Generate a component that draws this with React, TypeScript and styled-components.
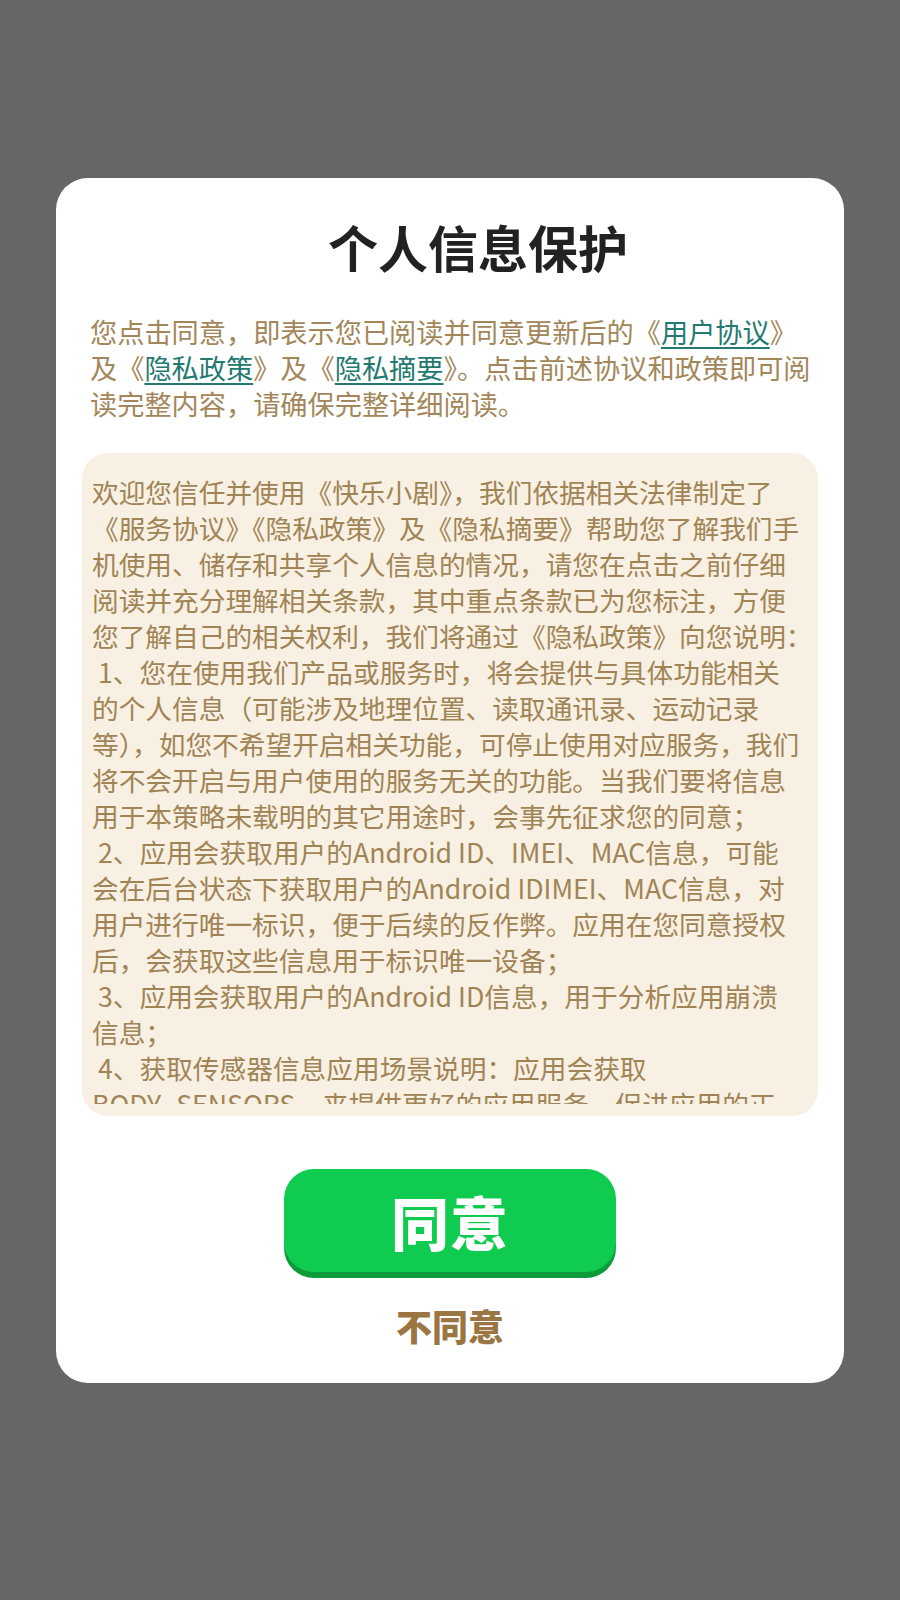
import React from "react";
import styled, { createGlobalStyle } from "styled-components";

const GlobalStyle = createGlobalStyle`
  html, body {
    margin: 0;
    padding: 0;
    background: #666666;
  }
  body {
    font-family: "Noto Sans CJK SC", "Noto Sans", sans-serif;
  }
`;

const StyledPage = styled.div`
  width: 900px;
  min-height: 1600px;
  padding-top: 178px;
  box-sizing: border-box;
`;

const StyledCard = styled.div`
  width: 788px;
  margin-left: 56px;
  background: #ffffff;
  border-radius: 32px;
  padding: 38px 26px 36px;
  box-sizing: border-box;
  display: flex;
  flex-direction: column;
  align-items: stretch;
`;

const StyledTitle = styled.h1`
  margin: 0;
  padding-left: 56px;
  text-align: center;
  font-size: 50px;
  line-height: 60px;
  font-weight: 700;
  color: #222222;
`;

const StyledIntro = styled.div`
  margin-top: 37px;
  padding-left: 8px;
  font-size: 27.2px;
  line-height: 36px;
  font-weight: 400;
  color: #a3875a;
`;

const StyledLine = styled.div`
  white-space: pre;
  height: 36px;
`;

const StyledLink = styled.span`
  color: #237a70;
  text-decoration: underline;
  text-decoration-thickness: 2px;
  text-underline-offset: 4px;
`;

const StyledBox = styled.div`
  margin-top: 32px;
  height: 663px;
  background: #f8f0e2;
  border-radius: 26px;
  padding: 21px 0 12px 10px;
  box-sizing: border-box;
`;

const StyledScroll = styled.div`
  height: 630px;
  overflow: hidden;
  font-size: 26.7px;
  line-height: 36px;
  font-weight: 400;
  color: #a08456;
`;

const StyledActions = styled.div`
  display: flex;
  flex-direction: column;
  align-items: center;
  margin-top: 53px;
`;

const StyledAgree = styled.button`
  width: 332px;
  height: 103px;
  border: none;
  border-radius: 30px;
  background: #0fcb4f;
  box-shadow: 0 6px 0 #0c9a3a;
  color: #ffffff;
  font-family: "Noto Sans CJK SC", sans-serif;
  font-size: 58px;
  font-weight: 900;
  letter-spacing: 1px;
  cursor: pointer;
`;

const StyledRefuse = styled.button`
  margin-top: 31px;
  border: none;
  background: none;
  padding: 0;
  color: #9c7642;
  font-family: "Noto Sans CJK SC", sans-serif;
  font-size: 36px;
  line-height: 44px;
  font-weight: 900;
  cursor: pointer;
`;

const termsLines = [
  "欢迎您信任并使用《快乐小剧》，我们依据相关法律制定了",
  "《服务协议》《隐私政策》及《隐私摘要》帮助您了解我们手",
  "机使用、储存和共享个人信息的情况，请您在点击之前仔细",
  "阅读并充分理解相关条款，其中重点条款已为您标注，方便",
  "您了解自己的相关权利，我们将通过《隐私政策》向您说明：",
  " 1、您在使用我们产品或服务时，将会提供与具体功能相关",
  "的个人信息（可能涉及地理位置、读取通讯录、运动记录",
  "等），如您不希望开启相关功能，可停止使用对应服务，我们",
  "将不会开启与用户使用的服务无关的功能。当我们要将信息",
  "用于本策略未载明的其它用途时，会事先征求您的同意；",
  " 2、应用会获取用户的Android ID、IMEI、MAC信息，可能",
  "会在后台状态下获取用户的Android IDIMEI、MAC信息，对",
  "用户进行唯一标识，便于后续的反作弊。应用在您同意授权",
  "后，会获取这些信息用于标识唯一设备；",
  " 3、应用会获取用户的Android ID信息，用于分析应用崩溃",
  "信息；",
  " 4、获取传感器信息应用场景说明：应用会获取",
  "BODY_SENSORS，来提供更好的应用服务，促进应用的正",
];

export default function App() {
  return (
    <>
      <GlobalStyle />
      <StyledPage>
        <StyledCard>
          <StyledTitle>个人信息保护</StyledTitle>
          <StyledIntro>
            <StyledLine>
              您点击同意，即表示您已阅读并同意更新后的《<StyledLink>用户协议</StyledLink>》
            </StyledLine>
            <StyledLine>
              及《<StyledLink>隐私政策</StyledLink>》及《<StyledLink>隐私摘要</StyledLink>》。点击前述协议和政策即可阅
            </StyledLine>
            <StyledLine>读完整内容，请确保完整详细阅读。</StyledLine>
          </StyledIntro>
          <StyledBox>
            <StyledScroll>
              {termsLines.map((line, i) => (
                <StyledLine key={i}>{line}</StyledLine>
              ))}
            </StyledScroll>
          </StyledBox>
          <StyledActions>
            <StyledAgree type="button">同意</StyledAgree>
            <StyledRefuse type="button">不同意</StyledRefuse>
          </StyledActions>
        </StyledCard>
      </StyledPage>
    </>
  );
}
